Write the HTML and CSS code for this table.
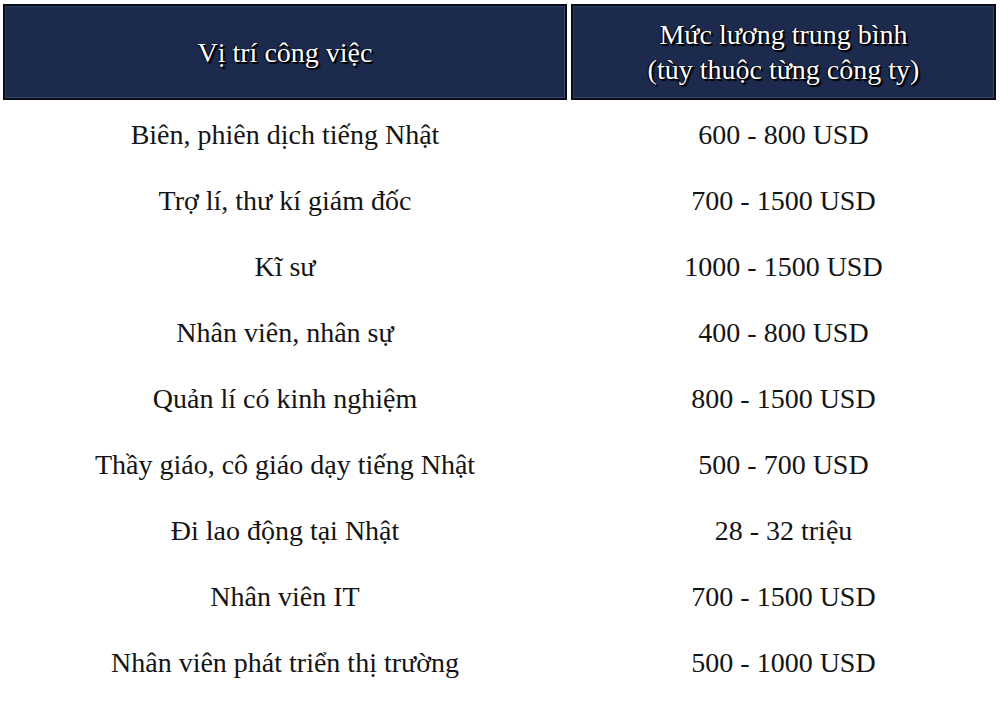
FILE: index.html
```html
<!DOCTYPE html>
<html lang="vi">
<head>
<meta charset="utf-8">
<title>Mức lương</title>
<link rel="stylesheet" href="styles.css">
</head>
<body>
<div class="salary">
  <div class="head">Vị trí công việc</div>
  <div class="head">Mức lương trung bình<br>(tùy thuộc từng công ty)</div>

  <div class="cell">Biên, phiên dịch tiếng Nhật</div><div class="cell">600 - 800 USD</div>
  <div class="cell">Trợ lí, thư kí giám đốc</div><div class="cell">700 - 1500 USD</div>
  <div class="cell">Kĩ sư</div><div class="cell">1000 - 1500 USD</div>
  <div class="cell">Nhân viên, nhân sự</div><div class="cell">400 - 800 USD</div>
  <div class="cell">Quản lí có kinh nghiệm</div><div class="cell">800 - 1500 USD</div>
  <div class="cell">Thầy giáo, cô giáo dạy tiếng Nhật</div><div class="cell">500 - 700 USD</div>
  <div class="cell">Đi lao động tại Nhật</div><div class="cell">28 - 32 triệu</div>
  <div class="cell">Nhân viên IT</div><div class="cell">700 - 1500 USD</div>
  <div class="cell">Nhân viên phát triển thị trường</div><div class="cell">500 - 1000 USD</div>
</div>
</body>
</html>
```
FILE: styles.css
```css
html, body {
  margin: 0;
  background: #ffffff;
}
body {
  font-family: "Liberation Serif", "Times New Roman", serif;
  font-size: 28px;
  color: #141414;
}
.salary {
  display: grid;
  grid-template-columns: 564px 425px;
  column-gap: 4px;
  padding: 4px 0 0 3px;
}
.head {
  box-sizing: border-box;
  height: 96px;
  display: flex;
  align-items: center;
  justify-content: center;
  text-align: center;
  line-height: 35px;
  background: #1c2a4d;
  border: 2px solid #080c18;
  box-shadow: inset 1px 1px 0 #2e3c60, inset -1px -1px 0 #3a4668;
  color: #ffffff;
  font-size: 28px;
  text-shadow: 1px 1px 0 #000000, 2px 2px 1px #000000, -1px 0 1px #000000;
}
.cell {
  box-sizing: border-box;
  height: 66px;
  padding-top: 3px;
  display: flex;
  align-items: center;
  justify-content: center;
  text-align: center;
}
```
